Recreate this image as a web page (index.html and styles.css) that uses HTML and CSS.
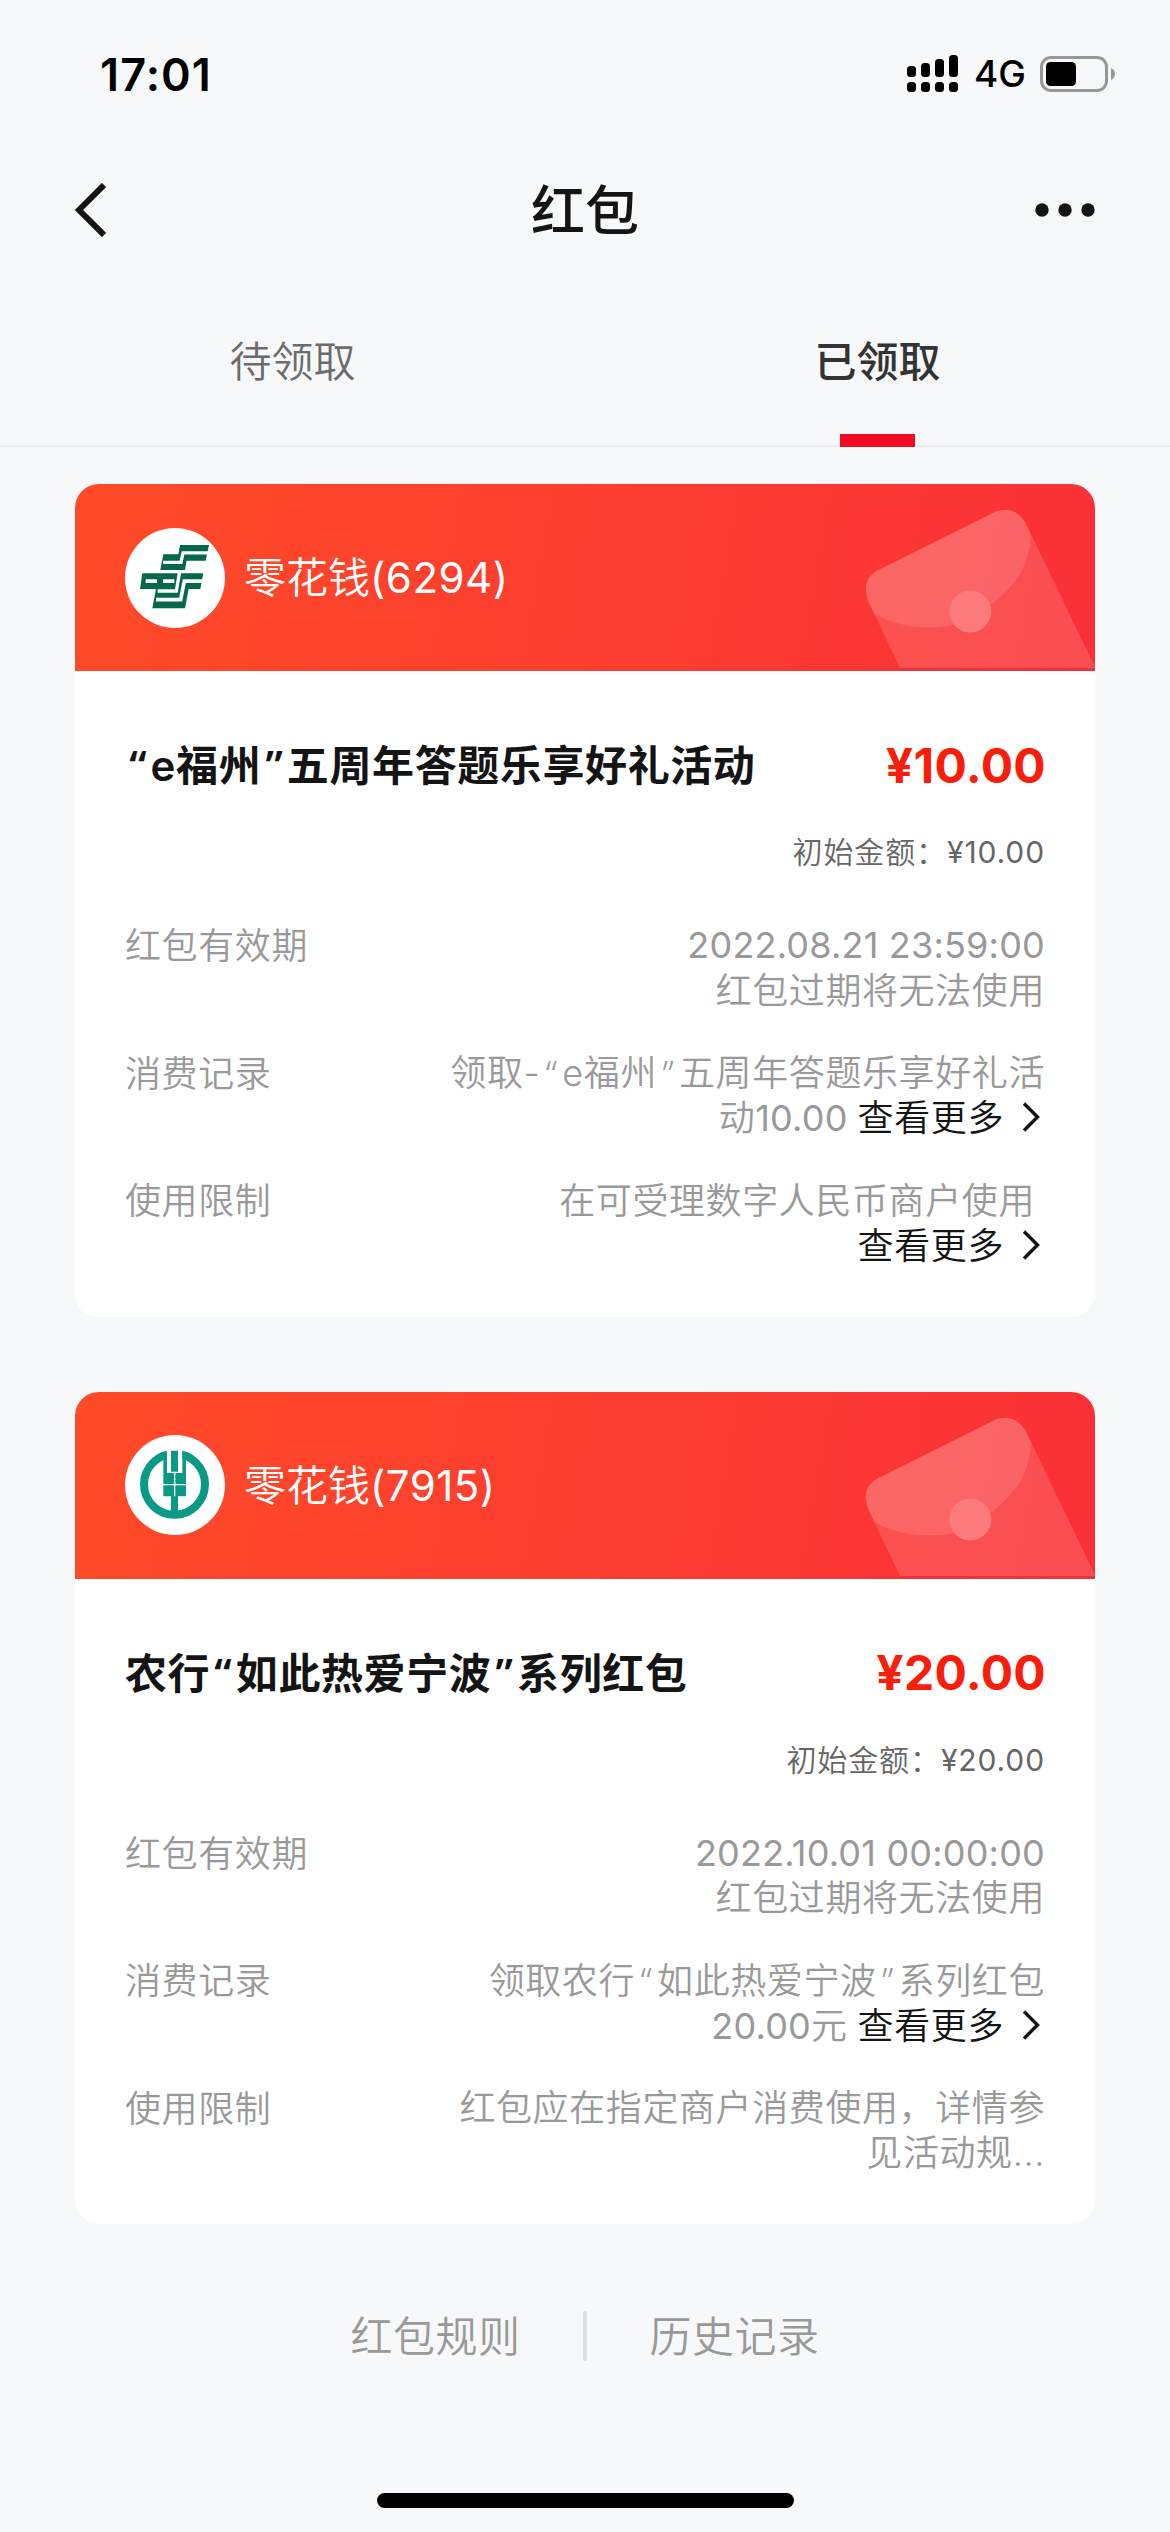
FILE: index.html
```html
<!DOCTYPE html>
<html lang="zh-CN">
<head>
<meta charset="utf-8">
<title>红包</title>
<link rel="stylesheet" href="styles.css">
</head>
<body>
<svg class="defs" width="0" height="0" aria-hidden="true">
  <symbol id="envelope" viewBox="0 0 240 187">
    <path fill="#fff" fill-opacity=".14" d="M45 184 L13.500 118 Q5 97 21.700 86.700 L140 27.700 Q159 21 170 37.700 L240 183 V184 Z"/>
    <path fill="#fff" fill-opacity=".12" d="M19.300 129.500 L13.500 118 Q5 97 21.700 86.700 L140 27.700 Q159 21 170 37.700 L176 51 C174 88 155 104 138.300 119.300 L98.300 141 C76 145.500 45 145 19.300 129.500 Z"/>
    <circle cx="115.300" cy="127.500" r="21" fill="#fb7a7b"/>
    <path fill="#e8303c" fill-opacity=".7" d="M45 184 H240 V187 H45 Z"/>
  </symbol>
  <symbol id="arrow" viewBox="0 0 20 32">
    <path d="M3 2.500 L16.500 16 L3 29.500" fill="none" stroke="#141414" stroke-width="3.400"/>
  </symbol>
</svg>

<header class="status">
  <span class="time">17:01</span>
  <div class="indicators">
    <svg width="51" height="38" viewBox="0 0 51 38">
      <rect x="0" y="11" width="9" height="11" rx="3.500"/><rect x="14" y="8" width="9" height="14" rx="3.500"/><rect x="28" y="4" width="9" height="18" rx="3.500"/><rect x="42" y="0" width="9" height="22" rx="3.500"/>
      <rect x="0" y="27" width="9" height="10" rx="3.500"/><rect x="14" y="27" width="9" height="10" rx="3.500"/><rect x="28" y="27" width="9" height="10" rx="3.500"/><rect x="42" y="27" width="9" height="10" rx="3.500"/>
    </svg>
    <span class="network">4G</span>
    <svg width="76" height="36" viewBox="0 0 76 36">
      <rect x="1.500" y="1.500" width="65" height="33" rx="9.500" fill="none" stroke="#979799" stroke-width="3"/>
      <rect x="6" y="6" width="30" height="24" rx="4.500"/>
      <path d="M71 12 Q75 14 75 18 T71 24 Z" fill="#979799"/>
    </svg>
  </div>
</header>

<nav class="navbar">
  <svg width="32" height="54" viewBox="0 0 32 54"><path d="M30 2 L5 27 L30 52" fill="none" stroke="#141414" stroke-width="6"/></svg>
  <h1>红包</h1>
  <svg width="60" height="14" viewBox="0 0 60 14" fill="#141414"><circle cx="7" cy="7" r="6.700"/><circle cx="30" cy="7" r="6.700"/><circle cx="53" cy="7" r="6.700"/></svg>
</nav>

<div class="tabs">
  <div class="tab">待领取</div>
  <div class="tab active">已领取</div>
</div>

<main class="cards">
  <section class="card">
    <div class="card-head">
      <svg class="logo" viewBox="15 24 300 300">
        <circle cx="165" cy="174" r="150" fill="#fff"/>
        <path fill="#04684a" d="M130 103 H175 L180 75 H267 L257 122 H200 L195 150 H121 L119 160 H250 L241 207 H206 L195 265 H97 L108 207 H60 L67 160 H119 Z"/>
        <g fill="none" stroke="#fff">
          <path stroke-width="10" d="M270 98.500 H189 L183 127 H129"/>
          <path stroke-width="10" d="M179 155 L169 213 H113"/>
          <path stroke-width="11" d="M255 183.500 H193 L182 239 H108"/>
          <path stroke-width="11" d="M77 183.500 H111 M129 183.500 H163"/>
        </g>
      </svg>
      <span class="wallet">零花钱<span class="digits">(6294)</span></span>
      <svg class="envelope" width="240" height="187"><use href="#envelope"/></svg>
    </div>
    <div class="card-body">
      <div class="title-row"><h2><span class="quote">“</span>e福州<span class="quote">”</span>五周年答题乐享好礼活动</h2><strong>¥10.00</strong></div>
      <p class="initial">初始金额：<span>¥10.00</span></p>
      <dl>
        <div class="row"><dt>红包有效期</dt><dd><div class="num">2022.08.21 23:59:00</div><div>红包过期将无法使用</div></dd></div>
        <div class="row"><dt>消费记录</dt><dd><div>领取-<span class="quote">“</span>e福州<span class="quote">”</span>五周年答题乐享好礼活</div><div>动<span class="num">10.00</span><a class="more">查看更多<svg width="20" height="32"><use href="#arrow"/></svg></a></div></dd></div>
        <div class="row"><dt>使用限制</dt><dd><div class="inset">在可受理数字人民币商户使用</div><div><a class="more">查看更多<svg width="20" height="32"><use href="#arrow"/></svg></a></div></dd></div>
      </dl>
    </div>
  </section>

  <section class="card">
    <div class="card-head">
      <svg class="logo" viewBox="45 78 300 300">
        <circle cx="195" cy="228" r="150" fill="#fff"/>
        <circle cx="193.500" cy="226" r="91.500" fill="none" stroke="#099a85" stroke-width="24"/>
        <path fill="#fff" d="M170 115 H217 V192 H170 Z"/>
        <path fill="#099a85" d="M183 125 H204 V188 H183 Z M160 140 L171 128 V192 H217 V128 L228 140 V262 H204 V315 H183 V262 H160 Z"/>
        <path stroke="#fff" stroke-width="4" d="M194 190 V262 M158 227 H230"/>
      </svg>
      <span class="wallet">零花钱<span class="digits">(7915)</span></span>
      <svg class="envelope" width="240" height="187"><use href="#envelope"/></svg>
    </div>
    <div class="card-body">
      <div class="title-row"><h2>农行<span class="quote">“</span>如此热爱宁波<span class="quote">”</span>系列红包</h2><strong>¥20.00</strong></div>
      <p class="initial">初始金额：<span>¥20.00</span></p>
      <dl>
        <div class="row"><dt>红包有效期</dt><dd><div class="num">2022.10.01 00:00:00</div><div>红包过期将无法使用</div></dd></div>
        <div class="row"><dt>消费记录</dt><dd><div>领取农行<span class="quote">“</span>如此热爱宁波<span class="quote">”</span>系列红包</div><div><span class="num">20.00</span>元<a class="more">查看更多<svg width="20" height="32"><use href="#arrow"/></svg></a></div></dd></div>
        <div class="row"><dt>使用限制</dt><dd><div>红包应在指定商户消费使用，详情参</div><div>见活动规...</div></dd></div>
      </dl>
    </div>
  </section>
</main>

<footer>
  <a>红包规则</a><i></i><a>历史记录</a>
</footer>
<div class="home"></div>
</body>
</html>
```
FILE: styles.css
```css
* { box-sizing: border-box; margin: 0; padding: 0; }
body {
  width: 1170px; height: 2532px; overflow: hidden;
  display: flex; flex-direction: column;
  background: #f7f8fa; color: #141414;
  font-family: Inter, "Noto Sans CJK SC", sans-serif;
  font-weight: 350;
}
svg { display: block; flex: none; }
.defs { position: absolute; }

.status { height: 150px; padding: 0 54px 2px 100px; display: flex; justify-content: space-between; align-items: center; color: #000; }
.time { font-size: 45px; font-weight: 600; letter-spacing: 1.100px; }
.indicators { display: flex; align-items: center; }
.network { width: 82px; padding-left: 16px; font-size: 37px; line-height: 38px; font-weight: 450; }

.navbar { height: 120px; padding: 0 75px 0 74px; display: flex; justify-content: space-between; align-items: center; }
.navbar h1 { font-size: 54px; font-weight: 500; line-height: 80px; padding-top: 3px; margin-left: -28px; margin-right: -57px; }

.tabs { height: 177px; display: flex; border-bottom: 2px solid #ecedef; }
.tab { flex: 1; padding-top: 62px; text-align: center; font-size: 42px; line-height: 60px; color: #6b6b6b; }
.tab.active { color: #333; font-weight: 500; display: flex; flex-direction: column; align-items: center; }
.tab.active::after { content: ""; width: 75px; height: 13px; margin: 42px 0 -2px; background: #f00a22; }

.cards { padding: 37px 75px 0; display: flex; flex-direction: column; gap: 75px; }
.card { height: 832.500px; border-radius: 24px; background: #fff; overflow: hidden; }
.card-head { height: 187px; padding-left: 50px; display: flex; align-items: center; background: linear-gradient(100deg, #ff4b28, #fa3037); color: #fff; }
.logo { width: 100px; height: 100px; }
.wallet { margin-left: 19px; padding-top: 1px; font-size: 42px; line-height: 60px; white-space: nowrap; }
.digits { font-weight: 400; letter-spacing: .5px; }
.envelope { margin-left: auto; }

.card-body { padding: 64px 50px 0; }
.title-row { height: 60px; display: flex; align-items: center; justify-content: space-between; white-space: nowrap; }
.title-row h2 { padding-top: 2px; font-size: 42px; font-weight: 600; letter-spacing: .6px; line-height: 60px; }
.title-row strong { padding-top: 1px; margin-right: -1px; font-size: 48px; font-weight: 700; letter-spacing: .3px; color: #fa1e0a; line-height: 60px; }
.quote { display: inline-block; width: .61em; line-height: 1; text-align: center; font-family: "Noto Sans", sans-serif; letter-spacing: 0; }
.initial { margin-top: 35px; height: 45px; line-height: 45px; font-size: 30px; letter-spacing: .9px; text-align: right; color: #666; }
.initial span { font-weight: 400; }
dl { margin-top: 48px; display: flex; flex-direction: column; gap: 37.500px; }
.row { display: flex; justify-content: space-between; font-size: 36px; line-height: 45px; letter-spacing: .6px; color: #999; }
dt, dd { white-space: nowrap; }
dt { padding-top: 1px; height: 45px; }
dd { text-align: right; }
dd > div { height: 45px; padding-top: 1px; display: flex; justify-content: flex-end; align-items: center; white-space: pre; }
.num { font-weight: 400; letter-spacing: .2px; }
dd > .num { padding-top: 0; }
.inset { padding-right: 10px; }
.more { margin-left: 10px; display: flex; align-items: center; color: #141414; }
.more svg { margin: -3px 4px 0 17px; }

footer { margin-top: 77px; height: 70px; display: flex; align-items: center; justify-content: center; gap: 62.500px; font-size: 42px; letter-spacing: .5px; color: #999; }
footer a { padding-bottom: 5px; }
footer i { width: 4px; height: 50px; border-radius: 2px; background: #dedfe0; }
.home { width: 417px; height: 15px; margin: 122px auto 0; border-radius: 8px; background: #000; }
```
